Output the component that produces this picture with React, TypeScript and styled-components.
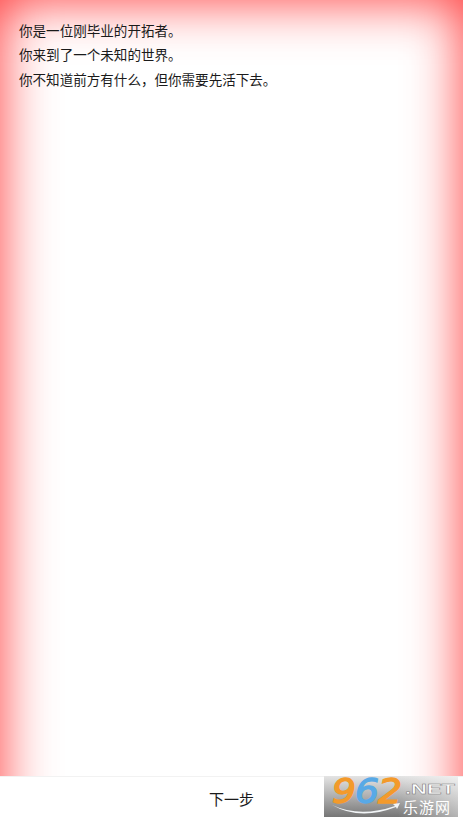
import React from 'react'
import styled, { createGlobalStyle } from 'styled-components'

const GlobalStyle = createGlobalStyle`
  html, body {
    margin: 0;
    padding: 0;
    background: #fff;
  }
`

const lines = [
  '你是一位刚毕业的开拓者。',
  '你来到了一个未知的世界。',
  '你不知道前方有什么，但你需要先活下去。',
]

function Logo() {
  return (
    <LogoBox>
      <svg width="134" height="41" viewBox="0 0 134 41" overflow="visible">
        <defs>
          <linearGradient id="shade" x1="0" y1="0" x2="0" y2="1">
            <stop offset="0" stopColor="#e4e4e4" />
            <stop offset="0.45" stopColor="#b4b4b4" />
            <stop offset="1" stopColor="#767676" />
          </linearGradient>
          <linearGradient id="fade" x1="0" y1="0" x2="1" y2="0">
            <stop offset="0.55" stopColor="#fff" stopOpacity="0" />
            <stop offset="1" stopColor="#fff" stopOpacity="0.45" />
          </linearGradient>
        </defs>
        <rect width="134" height="41" fill="url(#shade)" />
        <rect width="134" height="41" fill="url(#fade)" />
        <g fontFamily="'DejaVu Sans', sans-serif" fontStyle="italic" fontSize="33" strokeWidth="1.3">
          <text x="8" y="27" fill="#f39a2b" stroke="#f39a2b" textLength="24" lengthAdjust="spacingAndGlyphs">9</text>
          <text x="31" y="27" fill="#58a9e6" stroke="#58a9e6" textLength="24" lengthAdjust="spacingAndGlyphs">6</text>
          <text x="54" y="27" fill="#f39a2b" stroke="#f39a2b" textLength="24" lengthAdjust="spacingAndGlyphs">2</text>
        </g>
        <text x="81" y="18" fontFamily="'Liberation Sans', sans-serif" fontWeight="700" fontSize="14" fill="#fff" stroke="#777" strokeWidth="0.4" textLength="50" lengthAdjust="spacingAndGlyphs">.NET</text>
        <text x="79" y="37" fontFamily="'Noto Sans CJK SC', sans-serif" fontSize="15" fill="#fff" textLength="47">乐游网</text>
        <path d="M8 29 Q36 42 71 30 L69 28 L76 27 L73 33 L72 31 Q36 45 8 29 Z" fill="#f2f5f7" />
      </svg>
    </LogoBox>
  )
}

export default function App() {
  return (
    <Page>
      <GlobalStyle />
      <Story>
        {lines.map((line) => (
          <Line key={line}>{line}</Line>
        ))}
      </Story>
      <Footer>
        <NextButton>下一步</NextButton>
        <Logo />
      </Footer>
    </Page>
  )
}

const Page = styled.div`
  display: flex;
  flex-direction: column;
  width: 463px;
  height: 823px;
  overflow: hidden;
  font-family: 'Liberation Sans', 'Noto Sans CJK SC', sans-serif;
  color: #1a1a1a;
`

const Story = styled.div`
  position: relative;
  height: 776px;
  box-sizing: border-box;
  padding: 20px 19px 0 19px;
  overflow: hidden;

  &::before {
    content: '';
    position: absolute;
    inset: 0 0 -120px 0;
    box-shadow: inset 0 0 54px #ff3636;
    pointer-events: none;
  }
`

const Line = styled.div`
  position: relative;
  font-size: 13.55px;
  line-height: 24.4px;
`

const Footer = styled.div`
  position: relative;
  flex: 1;
  border-top: 1px solid #f2f2f2;
  display: flex;
  justify-content: center;
  align-items: flex-start;
`

const NextButton = styled.div`
  font-size: 15px;
  line-height: 46px;
`

const LogoBox = styled.div`
  position: absolute;
  left: 324px;
  top: -1px;
  line-height: 0;
`
